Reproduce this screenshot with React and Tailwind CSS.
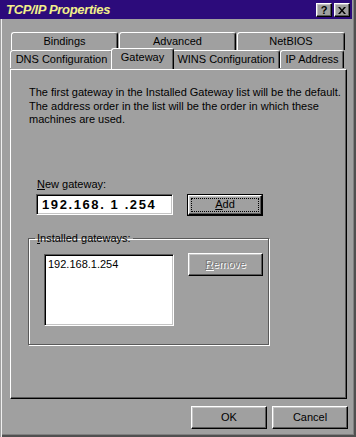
import React from 'react';

// win98-ish bevels on a darker face colour
const raised =
  'border border-t-white border-l-white border-r-black border-b-black shadow-[inset_-1px_-1px_0_#5a5a5a,inset_1px_1px_0_#c4c4c4]';
const sunken =
  'border border-t-[#5a5a5a] border-l-[#5a5a5a] border-r-white border-b-white shadow-[inset_1px_1px_0_#000,inset_-1px_-1px_0_#c4c4c4]';

const Tab = ({ label, w, selected }) => {
  if (selected) {
    return (
      <div
        className={`relative z-10 -mx-[2px] -mt-[2px] h-[21px] ${w} flex justify-center pt-[2px] rounded-t-[3px] border-t border-l border-r border-t-white border-l-white border-r-black bg-[#a0a0a0] shadow-[inset_-1px_0_0_#5a5a5a]`}
      >
        {label}
      </div>
    );
  }
  return (
    <div
      className={`h-[18px] ${w} flex justify-center pt-[2px] rounded-t-[3px] border-t border-l border-r border-t-white border-l-white border-r-black shadow-[inset_-1px_0_0_#5a5a5a]`}
    >
      {label}
    </div>
  );
};

const Btn = ({ children, className = '' }) => (
  <div className={`${raised} flex items-center justify-center ${className}`}>{children}</div>
);

export default function App() {
  return (
    <div className="w-[356px] h-[437px] bg-[#a0a0a0] flex flex-col font-['Liberation_Sans',sans-serif] text-[11px] leading-[13px] text-black shadow-[inset_1px_0_0_#a0a0a0,inset_2px_0_0_#f0f0f0,inset_-2px_-2px_0_#505050,inset_-3px_-3px_0_#808080]">
      {/* title bar */}
      <div className="h-[19px] mr-[4px] bg-[#2c0b7b] flex items-center justify-between pl-[6px] pr-[2px]">
        <span className="text-[13px] font-bold italic text-[#f2f08a] tracking-[-0.3px]">TCP/IP Properties</span>
        <div className="flex gap-[2px] pt-[1px]">
          <div className={`${raised} w-[16px] h-[14px] bg-[#a0a0a0] flex items-center justify-center text-[11px] font-bold leading-none`}>?</div>
          <div className={`${raised} w-[16px] h-[14px] bg-[#a0a0a0] flex items-center justify-center`}>
            <svg width="8" height="7" viewBox="0 0 8 7">
              <path d="M0 0h2l2 2.5L6 0h2L5 3.5 8 7H6L4 4.5 2 7H0l3-3.5z" fill="#000" />
            </svg>
          </div>
        </div>
      </div>

      {/* tabs */}
      <div className="mt-[13px] ml-[11px] flex gap-[1px]">
        <Tab label="Bindings" w="w-[107px]" />
        <Tab label="Advanced" w="w-[117px]" />
        <Tab label="NetBIOS" w="w-[108px]" />
      </div>
      <div className="ml-[10px] flex">
        <Tab label="DNS Configuration" w="w-[103px]" />
        <Tab label="Gateway" w="w-[63px]" selected />
        <Tab label="WINS Configuration" w="w-[108px]" />
        <Tab label="IP Address" w="w-[64px]" />
      </div>

      {/* page */}
      <div className="ml-[10px] w-[337px] h-[330px] border border-t-white border-l-white border-r-black border-b-black shadow-[inset_-1px_-1px_0_#5a5a5a] pt-[16px] pl-[18px]">
        <p className="leading-[13.5px]">
          The first gateway in the Installed Gateway list will be the default.
          <br />
          The address order in the list will be the order in which these
          <br />
          machines are used.
        </p>

        <div className="mt-[51px] ml-[8px]">
          <u>N</u>ew gateway:
        </div>
        <div className="mt-[3px] ml-[7px] flex items-start gap-[14px]">
          <div className={`${sunken} w-[137px] h-[21px] bg-white flex items-center pl-[5px]`}>
            <span className="text-[13px] font-bold tracking-[1.6px] whitespace-pre">192.168. 1 .254</span>
          </div>
          <div className="w-[76px] h-[22px] border border-black">
            <div className={`${raised} h-full flex items-center justify-center`}>
              <div className="w-[68px] h-[14px] border border-dotted border-black flex items-center justify-center">
                <span>
                  <u>A</u>dd
                </span>
              </div>
            </div>
          </div>
        </div>

        <fieldset className="mt-[16px] -ml-[1px] w-[241px] border border-[#5a5a5a] shadow-[1px_1px_0_#fff,inset_1px_1px_0_#fff] pb-[18px]">
          <legend className="ml-[6px] px-[2px]">
            <u>I</u>nstalled gateways:
          </legend>
          <div className="mt-[8px] ml-[15px] flex items-start gap-[14px]">
            <div className={`${sunken} mt-[1px] w-[130px] h-[72px] bg-white pl-[3px] pt-[3px]`}>192.168.1.254</div>
            <Btn className="w-[75px] h-[23px]">
              <span className="text-[#7a7a7a] [text-shadow:1px_1px_0_#fff]">
                <u>R</u>emove
              </span>
            </Btn>
          </div>
        </fieldset>
      </div>

      {/* dialog buttons */}
      <div className="mt-[7px] pr-[8px] flex justify-end gap-[5px]">
        <Btn className="w-[76px] h-[23px]">OK</Btn>
        <Btn className="w-[76px] h-[23px]">Cancel</Btn>
      </div>
    </div>
  );
}
